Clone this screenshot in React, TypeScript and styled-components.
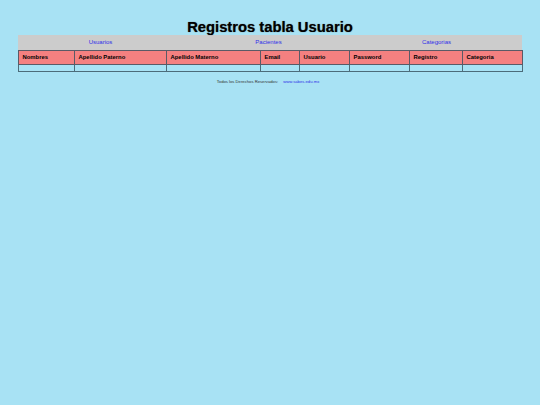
import styled, { createGlobalStyle } from "styled-components";

const columns = [
  { label: "Nombres", width: 56 },
  { label: "Apellido Paterno", width: 92 },
  { label: "Apellido Materno", width: 94 },
  { label: "Email", width: 39 },
  { label: "Usuario", width: 50 },
  { label: "Password", width: 60 },
  { label: "Registro", width: 53 },
  { label: "Categoria", width: 60 },
];

const links = ["Usuarios", "Pacientes", "Categorias"];

export default function App() {
  return (
    <>
      <GlobalStyle />
      <Page>
        <Title>Registros tabla Usuario</Title>
        <Nav>
          {links.map((link) => (
            <NavItem key={link}>
              <BlueLink href="#">{link}</BlueLink>
            </NavItem>
          ))}
        </Nav>
        <Table>
          <colgroup>
            {columns.map((col) => (
              <col key={col.label} width={col.width} />
            ))}
          </colgroup>
          <thead>
            <tr>
              {columns.map((col) => (
                <HeadCell key={col.label}>{col.label}</HeadCell>
              ))}
            </tr>
          </thead>
          <tbody>
            <tr>
              {columns.map((col) => (
                <BodyCell key={col.label} />
              ))}
            </tr>
          </tbody>
        </Table>
        <Footer>
          <span>Todos los Derechos Reservados:</span>
          <FooterLink href="#">www.sabes.edu.mx</FooterLink>
        </Footer>
      </Page>
    </>
  );
}

const GlobalStyle = createGlobalStyle`
  html, body {
    margin: 0;
    padding: 0;
    background: #a8e2f4;
  }
  body {
    font-family: "Liberation Sans", Arial, sans-serif;
    color: #000;
  }
`;

const Page = styled.div`
  width: 504px;
  height: 405px;
  margin: 0 auto;
  padding-top: 19px;
  box-sizing: border-box;
`;

const Title = styled.h1`
  margin: 0;
  height: 16px;
  line-height: 17px;
  font-size: 14.75px;
  font-weight: bold;
  text-align: center;
  text-shadow: 0 0 1px #555;
`;

const Nav = styled.div`
  display: grid;
  grid-template-columns: repeat(3, 1fr);
  height: 15px;
  background: #cccccc;
`;

const NavItem = styled.div`
  display: flex;
  align-items: center;
  justify-content: center;
  padding: 0 3px 2px 0;
`;

const BlueLink = styled.a`
  font-size: 6px;
  color: #3030e8;
  text-decoration: none;
`;

const Table = styled.table`
  width: 504px;
  table-layout: fixed;
  border-collapse: collapse;
  border: 1px solid #4c6c7a;
`;

const HeadCell = styled.th`
  height: 12px;
  padding: 0 0 1px 3.5px;
  background: #f48080;
  border: 1px solid #5a5a66;
  font-size: 5.9px;
  font-weight: bold;
  text-align: left;
`;

const BodyCell = styled.td`
  height: 6px;
  padding: 0;
  border: 1px solid #4c6c7a;
`;

const Footer = styled.div`
  display: flex;
  justify-content: center;
  gap: 5px;
  margin-top: 7px;
  padding-right: 4px;
  font-size: 4.2px;
  line-height: 6px;
  color: #333;
`;

const FooterLink = styled.a`
  color: #3030e8;
  text-decoration: none;
`;
